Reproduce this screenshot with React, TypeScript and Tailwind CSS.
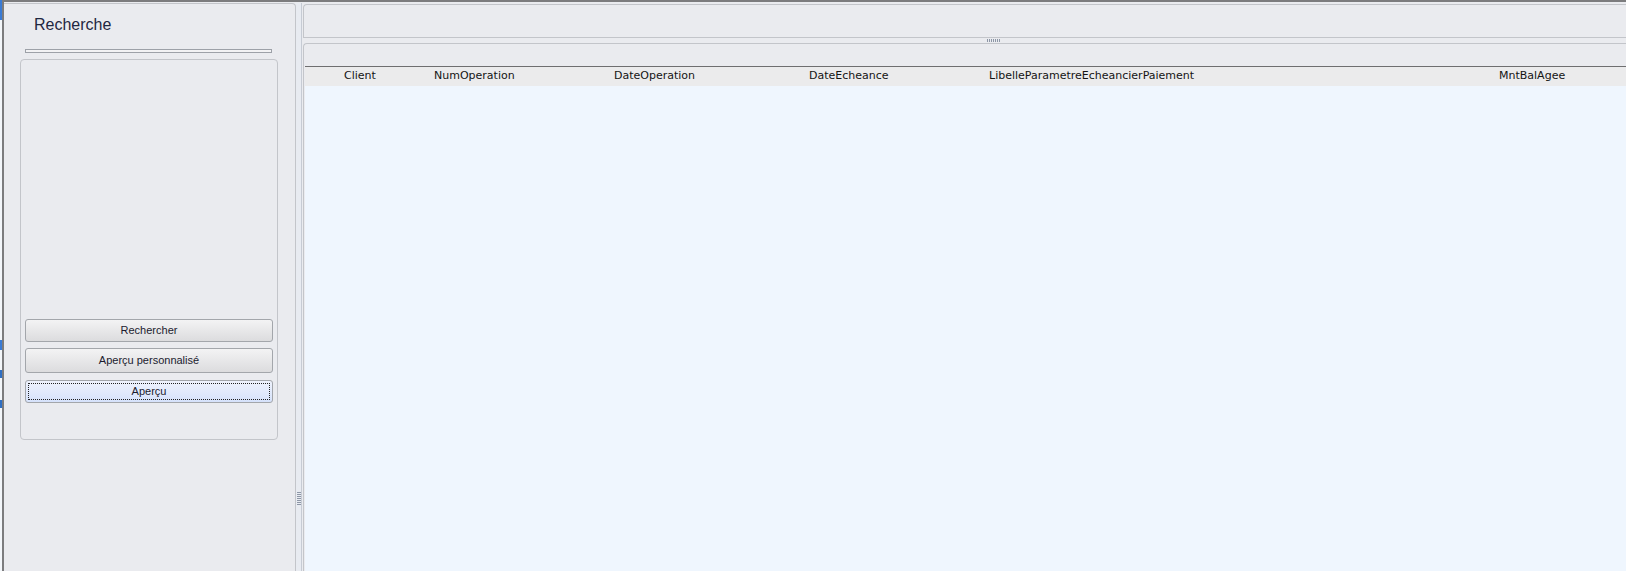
import React from "react";

const columns = [
  { label: "Client", width: 90 },
  { label: "NumOperation", width: 180 },
  { label: "DateOperation", width: 195 },
  { label: "DateEcheance", width: 180 },
  { label: "LibelleParametreEcheancierPaiement", width: 510 },
  { label: "MntBalAgee", width: 110 },
];

function VGrip() {
  return (
    <svg width="4" height="14" viewBox="0 0 4 14" className="block">
      {[0, 2, 4, 6, 8, 10, 12].map((y) => (
        <rect key={y} x="0" y={y} width="4" height="1" fill="#8d96a6" />
      ))}
    </svg>
  );
}

function HGrip() {
  return (
    <svg width="14" height="3" viewBox="0 0 14 3" className="block">
      {[0, 2, 4, 6, 8, 10, 12].map((x) => (
        <rect key={x} x={x} y="0" width="1" height="3" fill="#8d96a6" />
      ))}
    </svg>
  );
}

function Btn({ children, h, focused }: { children: React.ReactNode; h: string; focused?: boolean }) {
  return (
    <button
      className={`${h} w-full shrink-0 rounded-[3px] border border-[#a3a6ab] p-[2px] text-[11px] text-[#1b1b2e] ${
        focused
          ? "bg-gradient-to-b from-[#eef2fc] to-[#d6e2fb]"
          : "bg-gradient-to-b from-[#f3f3f4] to-[#dcdcde]"
      }`}
      style={{ fontFamily: '"Liberation Sans", Arial, sans-serif' }}
    >
      <div
        className={`flex h-full w-full items-center justify-center ${
          focused ? "border border-dotted border-[#222]" : ""
        }`}
      >
        {children}
      </div>
    </button>
  );
}

export default function App() {
  return (
    <div className="flex h-[571px] w-[1626px] overflow-hidden bg-[#eaebef]">
      {/* desktop glimpse */}
      <div className="flex w-[2px] shrink-0 flex-col bg-[#f3f6fa]">
        <div className="h-[20px] bg-[#3a7bd5]" />
        <div className="h-[320px]" />
        <div className="h-[10px] bg-[#3a7bd5]" />
        <div className="h-[20px]" />
        <div className="h-[8px] bg-[#2f6fc4]" />
        <div className="h-[22px]" />
        <div className="h-[8px] bg-[#2f6fc4]" />
        <div className="flex-1" />
      </div>

      {/* main window */}
      <div className="flex min-w-0 flex-1 border-l-2 border-t-2 border-[#7c7c7e] pt-[1px]">
        {/* left panel */}
        <div className="flex w-[292px] shrink-0 flex-col rounded-tr-[4px] border-r border-t border-[#c3c5ca] bg-[#eaebef]">
          <div
            className="pl-[30px] pt-[11px] text-[16px] leading-[20px] text-[#1f2741]"
            style={{ fontFamily: '"Liberation Sans", Arial, sans-serif' }}
          >
            Recherche
          </div>
          <div className="ml-[21px] mt-[14px] h-[4px] w-[247px] border border-[#9da1a8] bg-[#f2f2f4]" />
          <div className="ml-[16px] mt-[6px] flex h-[381px] w-[258px] flex-col rounded-[4px] border border-[#c3c5ca] px-[4px] pb-[36px]">
            <div className="flex-1" />
            <Btn h="h-[23px]">Rechercher</Btn>
            <div className="h-[6px] shrink-0" />
            <Btn h="h-[25px]">Aperçu personnalisé</Btn>
            <div className="h-[7px] shrink-0" />
            <Btn h="h-[23px]" focused>
              Aperçu
            </Btn>
          </div>
        </div>

        {/* vertical splitter */}
        <div className="flex w-[6px] shrink-0 flex-col items-center border-r border-[#c6cbd4] bg-[#e8ebf1] pt-[489px]">
          <VGrip />
        </div>

        {/* right area */}
        <div className="flex min-w-0 flex-1 flex-col pl-[1px] pt-[1px]">
          <div className="h-[34px] shrink-0 rounded-tl-[4px] border-l border-t border-b border-[#c3c5ca] bg-[#eaebef]" />
          <div className="flex h-[5px] shrink-0 items-center pl-[684px]">
            <HGrip />
          </div>
          <div className="flex min-h-0 flex-1 flex-col rounded-tl-[4px] border-l border-t border-[#c3c5ca] bg-[#eaebef] pl-[1px]">
            <div className="h-[22px] shrink-0" />
            <div
              className="flex h-[20px] shrink-0 items-center overflow-hidden border-t border-[#6e6e70] bg-[#ebebec] pl-[39px] text-[11px] text-[#141414]"
              style={{ fontFamily: '"DejaVu Sans", Verdana, sans-serif' }}
            >
              {columns.map((c) => (
                <div key={c.label} className="shrink-0 whitespace-nowrap" style={{ width: c.width }}>
                  {c.label}
                </div>
              ))}
            </div>
            <div className="flex-1 bg-[#eff6fe]" />
          </div>
        </div>
      </div>
    </div>
  );
}
